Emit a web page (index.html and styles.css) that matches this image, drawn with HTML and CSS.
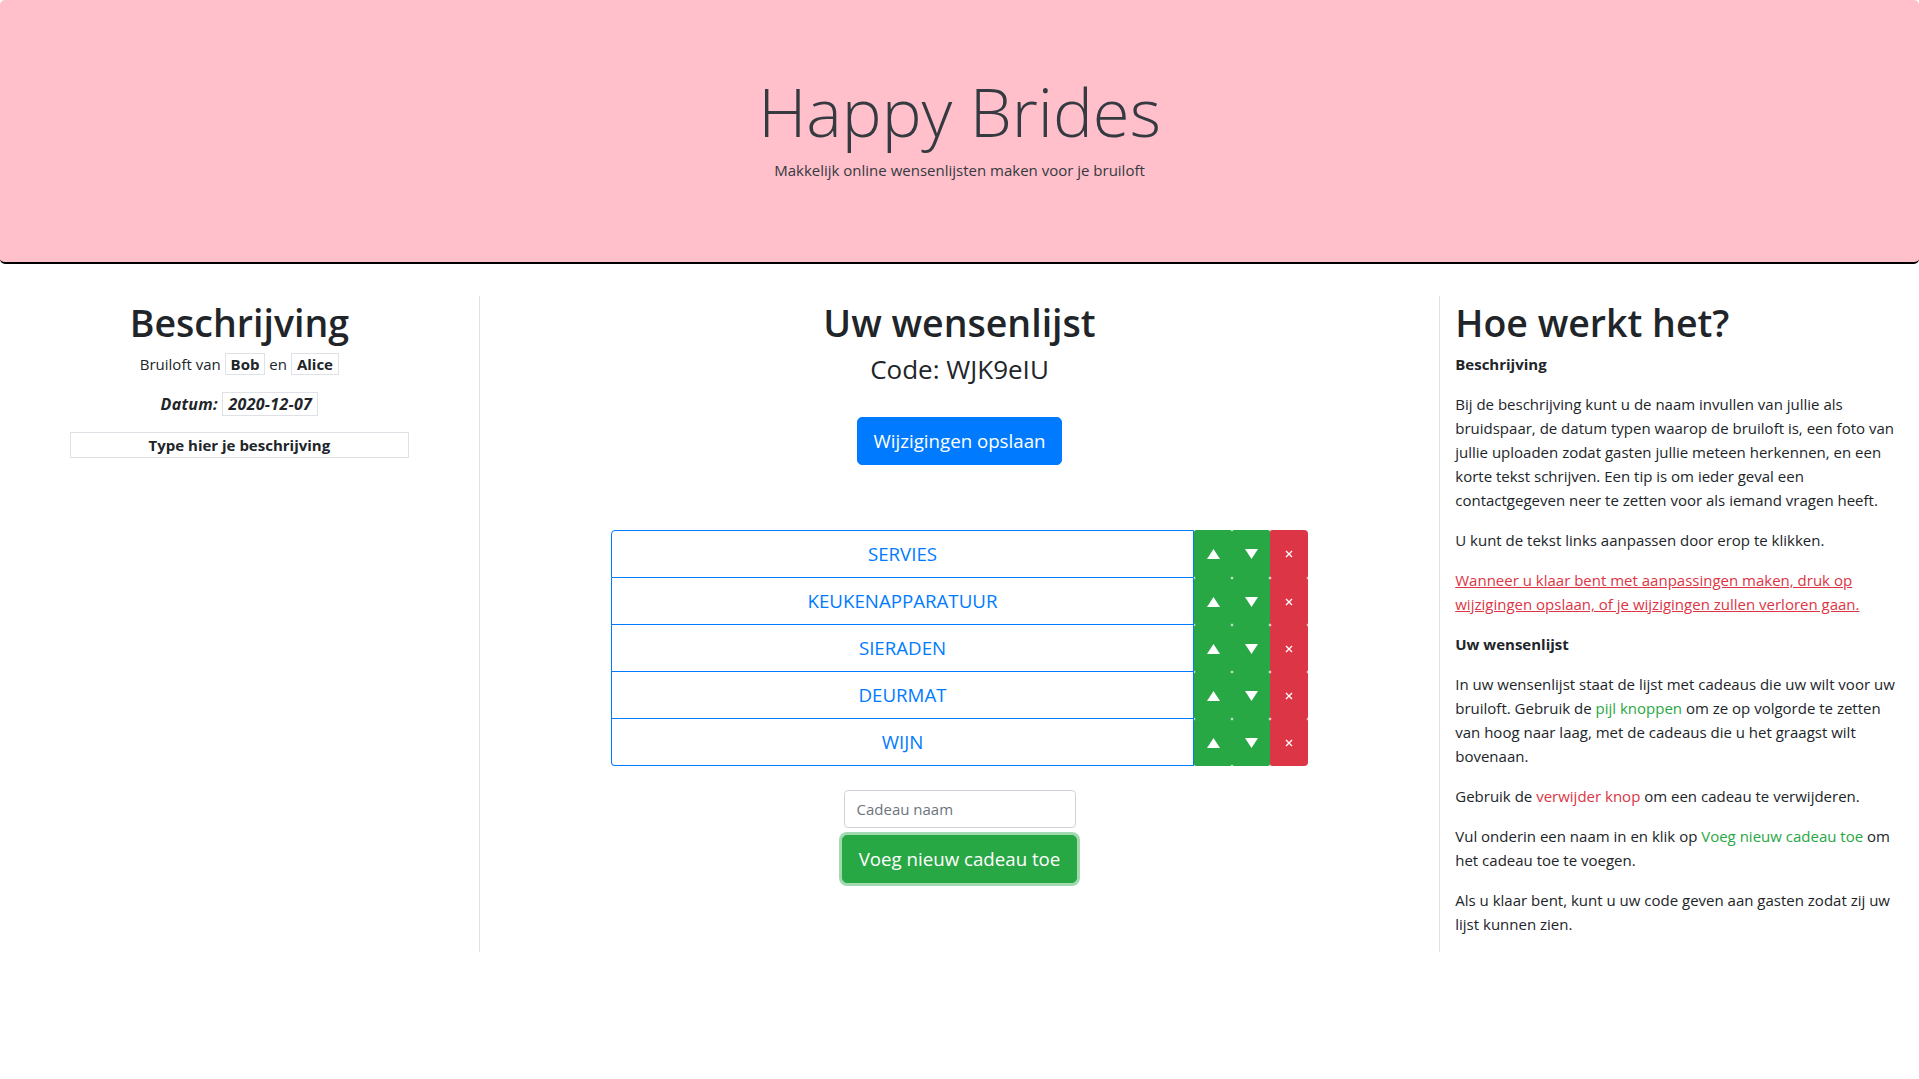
FILE: index.html
```html
<html>
<head>
  <title>Happy Brides</title>
  <meta charset="UTF-8">
  <link rel="stylesheet" href="styles.css">
</head>
<body>
  <header class="hero">
    <h1 class="hero-title">Happy Brides</h1>
    <p class="hero-sub">Makkelijk online wensenlijsten maken voor je bruiloft</p>
  </header>

  <main class="board">
    <section class="panel panel-left">
      <h1>Beschrijving</h1>
      <p>Bruiloft van <span class="field">Bob</span> en <span class="field">Alice</span></p>
      <p class="date">Datum: <span class="field">2020-12-07</span></p>
      <div class="desc">Type hier je beschrijving</div>
    </section>

    <section class="panel panel-main">
      <h1>Uw wensenlijst</h1>
      <h3>Code: WJK9eIU</h3>
      <div class="save">
        <button class="btn btn-save">Wijzigingen opslaan</button>
      </div>

      <div class="wishlist">
        <div class="gift">
          <div class="gift-name">SERVIES</div>
          <button class="move"><svg width="13" height="10" viewBox="0 0 13 10"><path d="M6.5 0L13 10H0z" fill="#fff"/></svg></button>
          <button class="move"><svg width="13" height="10" viewBox="0 0 13 10"><path d="M0 0h13L6.5 10z" fill="#fff"/></svg></button>
          <button class="remove"><svg width="8" height="8" viewBox="0 0 8 8"><path d="M1 1l6 6M7 1L1 7" stroke="#fff" stroke-width="1.3"/></svg></button>
        </div>
        <div class="gift">
          <div class="gift-name">KEUKENAPPARATUUR</div>
          <button class="move"><svg width="13" height="10" viewBox="0 0 13 10"><path d="M6.5 0L13 10H0z" fill="#fff"/></svg></button>
          <button class="move"><svg width="13" height="10" viewBox="0 0 13 10"><path d="M0 0h13L6.5 10z" fill="#fff"/></svg></button>
          <button class="remove"><svg width="8" height="8" viewBox="0 0 8 8"><path d="M1 1l6 6M7 1L1 7" stroke="#fff" stroke-width="1.3"/></svg></button>
        </div>
        <div class="gift">
          <div class="gift-name">SIERADEN</div>
          <button class="move"><svg width="13" height="10" viewBox="0 0 13 10"><path d="M6.5 0L13 10H0z" fill="#fff"/></svg></button>
          <button class="move"><svg width="13" height="10" viewBox="0 0 13 10"><path d="M0 0h13L6.5 10z" fill="#fff"/></svg></button>
          <button class="remove"><svg width="8" height="8" viewBox="0 0 8 8"><path d="M1 1l6 6M7 1L1 7" stroke="#fff" stroke-width="1.3"/></svg></button>
        </div>
        <div class="gift">
          <div class="gift-name">DEURMAT</div>
          <button class="move"><svg width="13" height="10" viewBox="0 0 13 10"><path d="M6.5 0L13 10H0z" fill="#fff"/></svg></button>
          <button class="move"><svg width="13" height="10" viewBox="0 0 13 10"><path d="M0 0h13L6.5 10z" fill="#fff"/></svg></button>
          <button class="remove"><svg width="8" height="8" viewBox="0 0 8 8"><path d="M1 1l6 6M7 1L1 7" stroke="#fff" stroke-width="1.3"/></svg></button>
        </div>
        <div class="gift">
          <div class="gift-name">WIJN</div>
          <button class="move"><svg width="13" height="10" viewBox="0 0 13 10"><path d="M6.5 0L13 10H0z" fill="#fff"/></svg></button>
          <button class="move"><svg width="13" height="10" viewBox="0 0 13 10"><path d="M0 0h13L6.5 10z" fill="#fff"/></svg></button>
          <button class="remove"><svg width="8" height="8" viewBox="0 0 8 8"><path d="M1 1l6 6M7 1L1 7" stroke="#fff" stroke-width="1.3"/></svg></button>
        </div>
      </div>

      <input class="gift-input" type="text" placeholder="Cadeau naam">
      <button class="btn btn-add">Voeg nieuw cadeau toe</button>
    </section>

    <section class="panel panel-right">
      <h1>Hoe werkt het?</h1>
      <p><strong>Beschrijving</strong></p>
      <p>Bij de beschrijving kunt u de naam invullen van jullie als bruidspaar, de datum typen waarop de bruiloft is, een foto van jullie uploaden zodat gasten jullie meteen herkennen, en een korte tekst schrijven. Een tip is om ieder geval een contactgegeven neer te zetten voor als iemand vragen heeft.</p>
      <p>U kunt de tekst links aanpassen door erop te klikken.</p>
      <p><a class="warn" href="#">Wanneer u klaar bent met aanpassingen maken, druk op wijzigingen opslaan, of je wijzigingen zullen verloren gaan.</a></p>
      <p><strong>Uw wensenlijst</strong></p>
      <p>In uw wensenlijst staat de lijst met cadeaus die uw wilt voor uw bruiloft. Gebruik de <span class="green">pijl knoppen</span> om ze op volgorde te zetten van hoog naar laag, met de cadeaus die u het graagst wilt bovenaan.</p>
      <p>Gebruik de <span class="red">verwijder knop</span> om een cadeau te verwijderen.</p>
      <p>Vul onderin een naam in en klik op <span class="green">Voeg nieuw cadeau toe</span> om het cadeau toe te voegen.</p>
      <p>Als u klaar bent, kunt u uw code geven aan gasten zodat zij uw lijst kunnen zien.</p>
    </section>
  </main>
</body>
</html>
```

FILE: styles.css
```css
body {
  margin: 0;
  background: #fff;
  color: #212529;
  font-family: 'Open Sans', 'Noto Sans', sans-serif;
  font-size: 15px;
  line-height: 24px;
}

p {
  margin: 0 0 16px;
}

h1 {
  margin: 0 0 8px;
  font-size: 37.5px;
  font-weight: 600;
  line-height: 48px;
}

h3 {
  margin: 0 0 8px;
  font-size: 26px;
  font-weight: 500;
  line-height: 34px;
}

/* header */
.hero {
  background: pink;
  color: #343a40;
  text-align: center;
  padding: 68px 32px 64px;
  margin-bottom: 32px;
  border-bottom: 2px solid #000;
  border-radius: 5px;
}

.hero-title {
  margin: 0 0 4px;
  font-size: 67px;
  font-weight: 300;
  line-height: 86px;
}

.hero-sub {
  margin: 0 0 16px;
}

/* three columns */
.board {
  display: flex;
}

.panel {
  box-sizing: border-box;
  padding: 0 15px;
}

.panel h1 {
  padding-top: 3px;
  margin-bottom: 5px;
}

.panel-left {
  flex: 0 0 25%;
  text-align: center;
  border-right: 1px solid #dee2e6;
}

.panel-main {
  flex: 0 0 50%;
  text-align: center;
}

.panel-right {
  flex: 0 0 25%;
  border-left: 1px solid #dee2e6;
}

/* description side */
.field {
  border: 1px solid #dee2e6;
  padding: 0 5px;
  font-weight: 700;
}

.date {
  font-size: 16px;
  font-weight: 700;
  font-style: italic;
  letter-spacing: .3px;
}

.desc {
  width: 75%;
  margin: 0 auto;
  border: 1px solid #dee2e6;
  font-weight: 700;
}

/* buttons */
.btn {
  font-family: inherit;
  font-size: 18.7px;
  line-height: 30px;
  padding: 8px 16px;
  color: #fff;
  border: 1px solid transparent;
  border-radius: 5px;
  cursor: pointer;
}

.save {
  margin-top: 31px;
}

.btn-save {
  background: #007bff;
  border-color: #007bff;
}

.btn-add {
  background: #28a745;
  border-color: #28a745;
  box-shadow: 0 0 0 3px rgba(72, 180, 97, .5);
}

/* wish list */
.wishlist {
  width: 75%;
  margin: 65px auto 0;
}

.gift {
  display: flex;
}

.gift-name {
  flex: 1;
  padding: 8px;
  border: 1px solid #007bff;
  border-top: 0;
  color: #007bff;
  font-size: 18.7px;
  line-height: 30px;
}

.gift:first-child .gift-name {
  border-top: 1px solid #007bff;
  border-top-left-radius: 4px;
}

.gift:last-child .gift-name {
  border-bottom-left-radius: 4px;
}

.move,
.remove {
  width: 38px;
  padding: 0;
  border: 0;
  border-radius: 2px;
  display: flex;
  align-items: center;
  justify-content: center;
  cursor: pointer;
}

.move {
  background: #28a745;
}

.remove {
  background: #dc3545;
}

.gift:first-child .remove {
  border-top-right-radius: 4px;
}

.gift:last-child .remove {
  border-bottom-right-radius: 4px;
}

.gift-input {
  display: block;
  box-sizing: border-box;
  width: 232px;
  height: 38px;
  margin: 24px auto 7px;
  padding: 6px 12px;
  border: 1px solid #ced4da;
  border-radius: 4px;
  font-family: inherit;
  font-size: 15px;
  color: #495057;
}

.gift-input::placeholder {
  color: #6c757d;
}

/* help text */
.warn {
  color: #dc3545;
}

.green {
  color: #28a745;
}

.red {
  color: #dc3545;
}
```
